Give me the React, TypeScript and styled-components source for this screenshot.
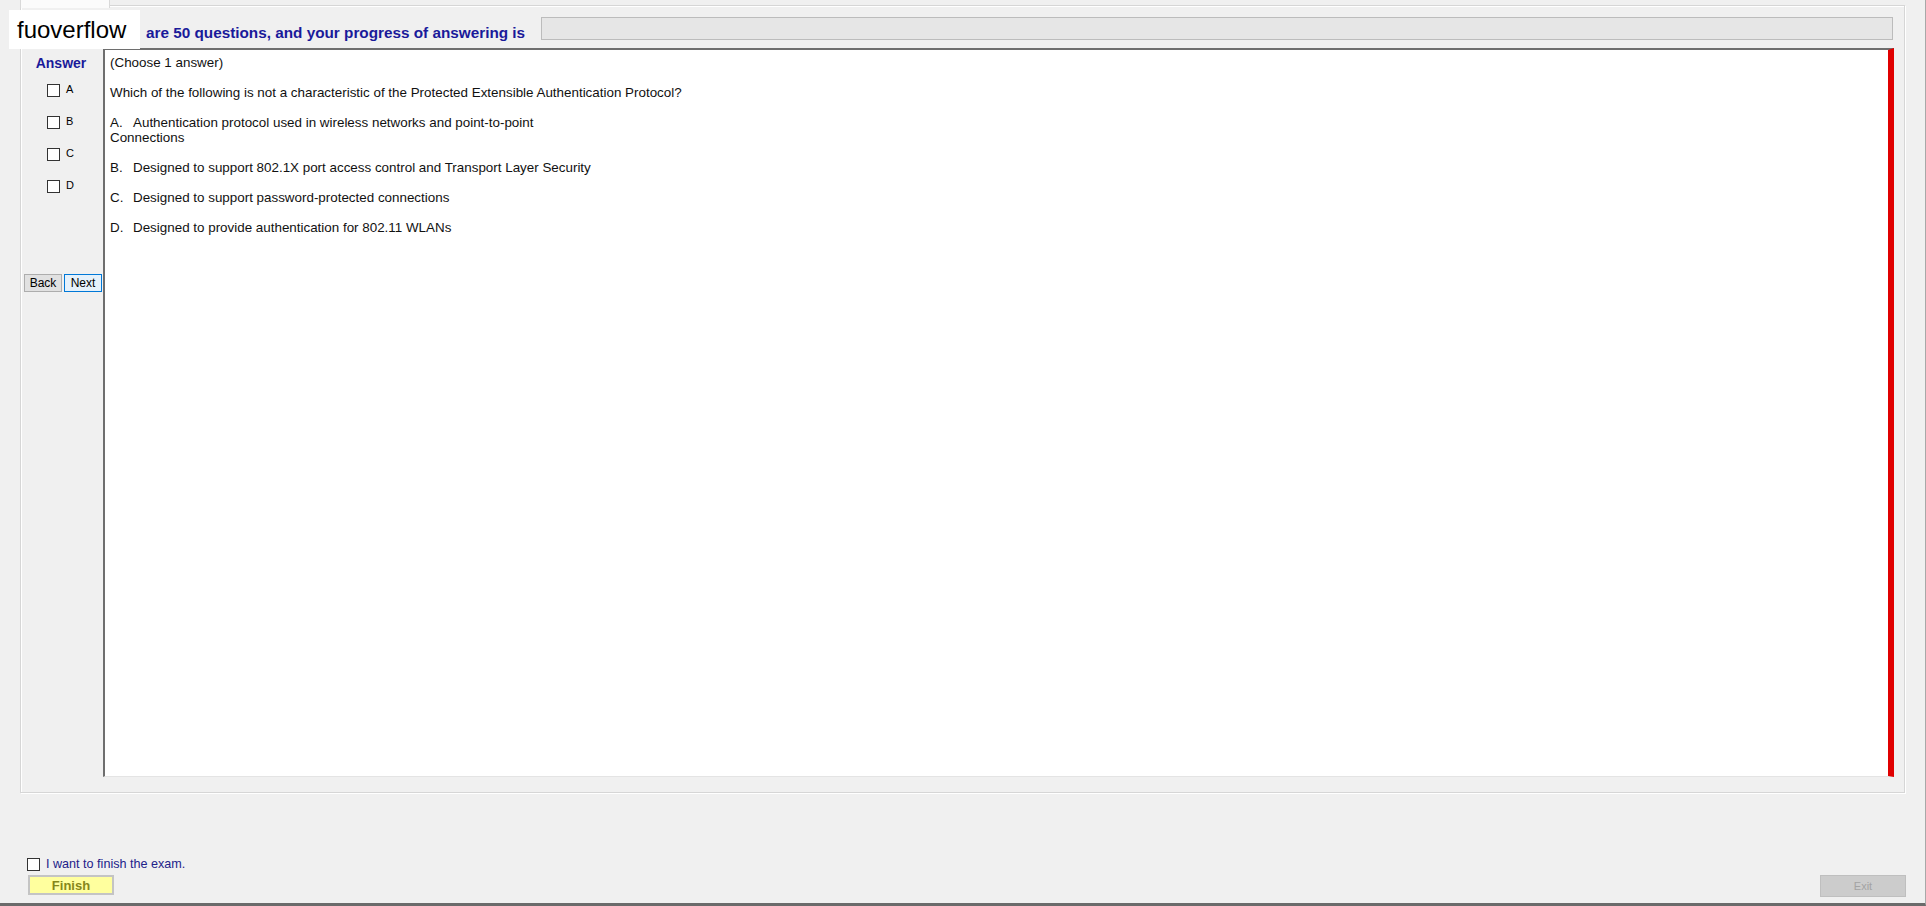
import React from "react";
import styled, { createGlobalStyle } from "styled-components";

const GlobalStyle = createGlobalStyle`
  html, body {
    margin: 0;
    padding: 0;
    background: #f0f0f0;
    font-family: "Liberation Sans", Arial, sans-serif;
  }
`;

const Window = styled.div`
  width: 1926px;
  height: 906px;
  box-sizing: border-box;
  display: flex;
  flex-direction: column;
  background: #f0f0f0;
  border-bottom: 3px solid #6a6a6a;
  border-right: 1px solid #a8a8a8;
  position: relative;
`;

const TabArea = styled.div`
  padding: 0 20px 0 20px;
  display: flex;
  flex-direction: column;
`;

const TabRow = styled.div`
  height: 5px;
  display: flex;
  position: relative;
  z-index: 2;
`;

const Tab = styled.div`
  width: 88px;
  height: 8px;
  background: #fbfbfb;
  border: 1px solid #d9d9d9;
  border-top: none;
  border-bottom: none;
`;

const TabPage = styled.div`
  height: 788px;
  box-sizing: border-box;
  border: 1px solid #d6d6d6;
  box-shadow: inset 1px 1px 0 #ffffff, 1px 1px 0 #ffffff;
  display: flex;
  flex-direction: column;
`;

const Header = styled.div`
  height: 42px;
  display: flex;
  align-items: center;
  padding: 0 11px 0 125px;
  gap: 16px;
`;

const Heading = styled.div`
  font-weight: bold;
  font-size: 15.3px;
  color: #1a1a9a;
  white-space: nowrap;
  margin-top: 11px;
`;

const ProgressBar = styled.div`
  flex: 1;
  height: 23px;
  margin-top: 2px;
  box-sizing: border-box;
  background: #e6e6e6;
  border: 1px solid #bcbcbc;
`;

const Logo = styled.div`
  position: absolute;
  left: 9px;
  top: 10px;
  width: 131px;
  height: 39px;
  box-sizing: border-box;
  background: #ffffff;
  padding-left: 8px;
  font-size: 24px;
  line-height: 39px;
  color: #000000;
  z-index: 5;
`;

const Body = styled.div`
  display: flex;
  height: 729px;
  padding-right: 10px;
`;

const Sidebar = styled.div`
  width: 82px;
  display: flex;
  flex-direction: column;
  align-items: stretch;
`;

const AnswerTitle = styled.div`
  font-weight: bold;
  font-size: 14px;
  color: #1a1a9a;
  text-align: center;
  margin: 7px 2px 13px 0;
`;

const Choices = styled.div`
  display: flex;
  flex-direction: column;
  gap: 18px;
  padding-left: 26px;
`;

const Choice = styled.label`
  display: flex;
  align-items: flex-start;
  gap: 6px;
  height: 14px;
  font-size: 11px;
  line-height: 11px;
  color: #000;
`;

const Box = styled.span`
  width: 13px;
  height: 13px;
  box-sizing: border-box;
  background: #ffffff;
  border: 1px solid #333333;
  flex-shrink: 0;
`;

const NavButtons = styled.div`
  display: flex;
  gap: 2px;
  padding-left: 3px;
  margin-top: 80px;
`;

const NavButton = styled.button<{ $focused?: boolean }>`
  width: 38px;
  height: 18px;
  padding: 0;
  box-sizing: border-box;
  font-family: "Liberation Sans", Arial, sans-serif;
  font-size: 12px;
  color: #000;
  background: ${(p) => (p.$focused ? "#e5f1fb" : "#e1e1e1")};
  border: 1px solid ${(p) => (p.$focused ? "#0078d7" : "#adadad")};
`;

const Question = styled.div`
  flex: 1;
  background: #ffffff;
  border-top: 2px solid #6e6e6e;
  border-left: 2px solid #6e6e6e;
  border-bottom: 1px solid #e4e4e4;
  border-right: 6px solid #e00000;
  padding: 5px 6px 0 5px;
  font-size: 13.4px;
  line-height: 15px;
  color: #111;
`;

const Para = styled.p`
  margin: 0 0 15px 0;
`;

const Letter = styled.span`
  display: inline-block;
  width: 23px;
`;

const Footer = styled.div`
  flex: 1;
  display: flex;
  justify-content: space-between;
  align-items: flex-end;
  padding: 0 19px 8px 27px;
`;

const FinishGroup = styled.div`
  display: flex;
  flex-direction: column;
  gap: 4px;
`;

const FinishCheck = styled.label`
  display: flex;
  align-items: center;
  gap: 6px;
  font-size: 12.6px;
  color: #22228a;
`;

const FinishButton = styled.button`
  width: 86px;
  height: 20px;
  margin-left: 1px;
  padding: 0;
  box-sizing: border-box;
  background: #ffff9e;
  border: 2px solid #c4c4c4;
  font-family: "Liberation Sans", Arial, sans-serif;
  font-weight: bold;
  font-size: 13px;
  color: #86861a;
`;

const ExitButton = styled.button`
  width: 86px;
  height: 22px;
  margin-bottom: -2px;
  padding: 0;
  box-sizing: border-box;
  background: #cccccc;
  border: 1px solid #bfbfbf;
  font-family: "Liberation Sans", Arial, sans-serif;
  font-size: 11px;
  color: #a3a3a3;
`;

const options = [
  { key: "A", text: "Authentication protocol used in wireless networks and point-to-point", extra: "Connections" },
  { key: "B", text: "Designed to support 802.1X port access control and Transport Layer Security" },
  { key: "C", text: "Designed to support password-protected connections" },
  { key: "D", text: "Designed to provide authentication for 802.11 WLANs" },
];

export default function App() {
  return (
    <Window>
      <GlobalStyle />
      <Logo>fuoverflow</Logo>
      <TabArea>
        <TabRow>
          <Tab />
        </TabRow>
        <TabPage>
          <Header>
            <Heading>are 50 questions, and your progress of answering is</Heading>
            <ProgressBar />
          </Header>
          <Body>
            <Sidebar>
              <AnswerTitle>Answer</AnswerTitle>
              <Choices>
                {options.map((o) => (
                  <Choice key={o.key}>
                    <Box />
                    {o.key}
                  </Choice>
                ))}
              </Choices>
              <NavButtons>
                <NavButton>Back</NavButton>
                <NavButton $focused>Next</NavButton>
              </NavButtons>
            </Sidebar>
            <Question>
              <Para>(Choose 1 answer)</Para>
              <Para>
                Which of the following is not a characteristic of the Protected Extensible Authentication Protocol?
              </Para>
              {options.map((o) => (
                <Para key={o.key}>
                  <Letter>{o.key}.</Letter>
                  {o.text}
                  {o.extra && (
                    <>
                      <br />
                      {o.extra}
                    </>
                  )}
                </Para>
              ))}
            </Question>
          </Body>
        </TabPage>
      </TabArea>
      <Footer>
        <FinishGroup>
          <FinishCheck>
            <Box />I want to finish the exam.
          </FinishCheck>
          <FinishButton>Finish</FinishButton>
        </FinishGroup>
        <ExitButton>Exit</ExitButton>
      </Footer>
    </Window>
  );
}
